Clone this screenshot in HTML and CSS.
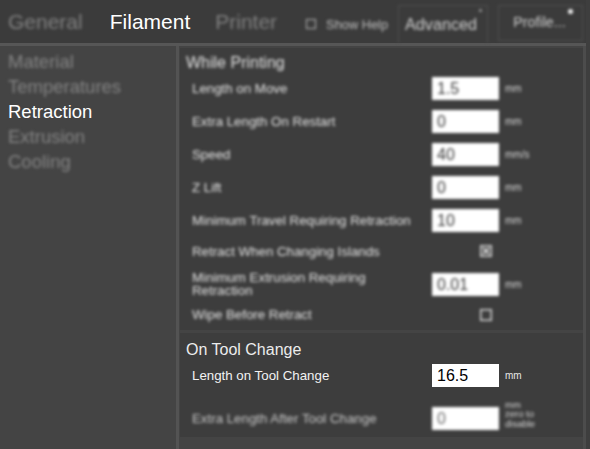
FILE: index.html
```html
<!DOCTYPE html>
<html>
<head>
<meta charset="utf-8">
<link rel="stylesheet" href="styles.css">
</head>
<body>
<div class="app">
  <header class="topbar">
    <nav class="tabs">
      <span class="tab tab-general blur">General</span>
      <span class="tab tab-filament active">Filament</span>
      <span class="tab tab-printer blur">Printer</span>
    </nav>
    <div class="showhelp blur"><span class="cb"></span><span class="showhelp-text">Show Help</span></div>
    <div class="btn btn-adv blur">Advanced<span class="dot"></span></div>
    <div class="btn btn-prof blur">Profile...<span class="dot dot-light"></span></div>
  </header>
  <div class="main">
    <aside class="side">
      <div class="side-item blur">Material</div>
      <div class="side-item blur">Temperatures</div>
      <div class="side-item active">Retraction</div>
      <div class="side-item blur">Extrusion</div>
      <div class="side-item blur">Cooling</div>
    </aside>
    <div class="content">
      <section class="group group-1">
        <h2 class="group-title blur">While Printing</h2>
        <div class="row">
          <span class="label blur">Length on Move</span>
          <span class="field blur">1.5</span>
          <span class="unit blur">mm</span>
        </div>
        <div class="row">
          <span class="label blur">Extra Length On Restart</span>
          <span class="field blur">0</span>
          <span class="unit blur">mm</span>
        </div>
        <div class="row">
          <span class="label blur">Speed</span>
          <span class="field blur">40</span>
          <span class="unit blur">mm/s</span>
        </div>
        <div class="row">
          <span class="label blur">Z Lift</span>
          <span class="field blur">0</span>
          <span class="unit blur">mm</span>
        </div>
        <div class="row">
          <span class="label blur">Minimum Travel Requiring Retraction</span>
          <span class="field blur">10</span>
          <span class="unit blur">mm</span>
        </div>
        <div class="row row-check">
          <span class="label blur">Retract When Changing Islands</span>
          <span class="check-cell blur">
            <svg class="check" width="12" height="12" viewBox="0 0 12 12">
              <rect x="0.75" y="0.75" width="10.5" height="10.5" fill="none" stroke="#d8d8d8" stroke-width="1.5"/>
              <path d="M3 3 L9 9 M9 3 L3 9" stroke="#d8d8d8" stroke-width="1.8"/>
            </svg>
          </span>
        </div>
        <div class="row row-two">
          <span class="label label-two blur">Minimum Extrusion Requiring Retraction</span>
          <span class="field blur">0.01</span>
          <span class="unit blur">mm</span>
        </div>
        <div class="row row-check2">
          <span class="label blur">Wipe Before Retract</span>
          <span class="check-cell blur">
            <svg class="check" width="12" height="12" viewBox="0 0 12 12">
              <rect x="0.75" y="0.75" width="10.5" height="10.5" fill="none" stroke="#d8d8d8" stroke-width="1.5"/>
            </svg>
          </span>
        </div>
      </section>
      <section class="group group-2">
        <h2 class="group-title">On Tool Change</h2>
        <div class="row">
          <span class="label label-sharp">Length on Tool Change</span>
          <span class="field field-sharp">16.5</span>
          <span class="unit unit-sharp">mm</span>
        </div>
        <div class="row row-last">
          <span class="label label-dim blur">Extra Length After Tool Change</span>
          <span class="field field-disabled blur">0</span>
          <span class="unit unit-multi blur">mm<br>zero to<br>disable</span>
        </div>
      </section>
    </div>
  </div>
</div>
</body>
</html>
```

FILE: styles.css
```css
html, body {
  margin: 0;
  padding: 0;
}
body {
  background: #3e3e3e;
  font-family: "Liberation Sans", Arial, sans-serif;
  width: 590px;
  height: 449px;
  overflow: hidden;
}
.blur {
  filter: blur(1.35px);
}
.app {
  width: 586px;
  height: 449px;
  display: flex;
  flex-direction: column;
}
.topbar {
  height: 43px;
  background: #3b3b3b;
  border-bottom: 3px solid #565656;
  display: flex;
  align-items: flex-start;
  flex: none;
}
.tabs {
  display: flex;
  padding-left: 8px;
  padding-top: 10px;
}
.tab {
  font-size: 21px;
  line-height: 24px;
  color: #808080;
}
.tab.active {
  color: #ffffff;
}
.tab-filament {
  margin-left: 27px;
}
.tab-printer {
  margin-left: 25px;
}
.showhelp {
  display: flex;
  align-items: center;
  height: 18px;
  margin-top: 15px;
  margin-left: 29px;
  color: #c0c0c0;
  font-size: 12.8px;
}
.cb {
  width: 8px;
  height: 8px;
  border: 1.5px solid #b8b8b8;
  margin-right: 10px;
}
.btn {
  position: relative;
  box-sizing: border-box;
  margin-top: 5px;
  border: 1px solid #505050;
  color: #cfcfcf;
  display: flex;
  align-items: center;
  justify-content: center;
}
.btn-adv {
  margin-left: 10px;
  width: 90px;
  height: 38px;
  border-bottom: none;
  font-size: 16.2px;
  padding-right: 4px;
}
.btn-prof {
  margin-left: 10px;
  width: 85px;
  height: 36px;
  font-size: 14.3px;
  padding-right: 2px;
  padding-bottom: 2px;
}
.dot {
  position: absolute;
  top: 3px;
  right: 5px;
  width: 3px;
  height: 3px;
  border-radius: 50%;
  background: #a0a0a0;
}
.dot-light {
  top: 3px;
  right: 9px;
  width: 5px;
  height: 5px;
  background: #f4f4f4;
}
.main {
  flex: 1;
  display: flex;
  border-right: 3px solid #4c4c4c;
  min-height: 0;
}
.side {
  width: 176px;
  flex: none;
  background: #444444;
  padding-top: 3px;
}
.side-item {
  font-size: 18.5px;
  line-height: 25px;
  padding-left: 8px;
  color: #848484;
}
.side-item.active {
  color: #ffffff;
}
.content {
  flex: 1;
  background: #444444;
  border-left: 3px solid #535353;
  padding-left: 1px;
  display: flex;
  flex-direction: column;
}
.group {
  background: #3d3d3d;
}
.group-1 {
  margin-top: 2px;
  height: 276px;
  padding-top: 6px;
}
.group-2 {
  margin-top: 3px;
  height: 96px;
  padding-top: 8px;
}
.group-title {
  margin: 0 0 0 6px;
  font-size: 16px;
  line-height: 18px;
  font-weight: normal;
  color: #ececec;
}
.group-1 .group-title {
  color: #e2e2e2;
}
.row {
  display: flex;
  align-items: center;
  height: 33px;
  padding-left: 12px;
}
.row-check {
  height: 28px;
}
.row-two {
  height: 38px;
}
.row-check2 {
  height: 23px;
}
.row-last {
  height: 40px;
  padding-top: 6px;
}
.label {
  width: 240px;
  flex: none;
  font-size: 13.3px;
  color: #e4e4e4;
}
.label-two {
  width: 230px;
  margin-right: 10px;
  line-height: 13px;
}
.label-sharp {
  color: #f2f2f2;
}
.label-dim {
  color: #c8c8c8;
}
.field {
  box-sizing: border-box;
  width: 67px;
  height: 23px;
  flex: none;
  background: #ffffff;
  color: #3a3a3a;
  font-size: 16px;
  line-height: 23px;
  padding-left: 5px;
}
.field-sharp {
  color: #000000;
}
.field.field-disabled {
  color: #6a6a6a;
}
.unit {
  margin-left: 6px;
  font-size: 10px;
  color: #d8d8d8;
}
.unit-sharp {
  color: #e6e6e6;
}
.unit-multi {
  line-height: 9.5px;
  font-size: 9.5px;
  margin-top: -8px;
}
.check-cell {
  display: flex;
  padding-left: 48px;
}
.check {
  display: block;
}
```
